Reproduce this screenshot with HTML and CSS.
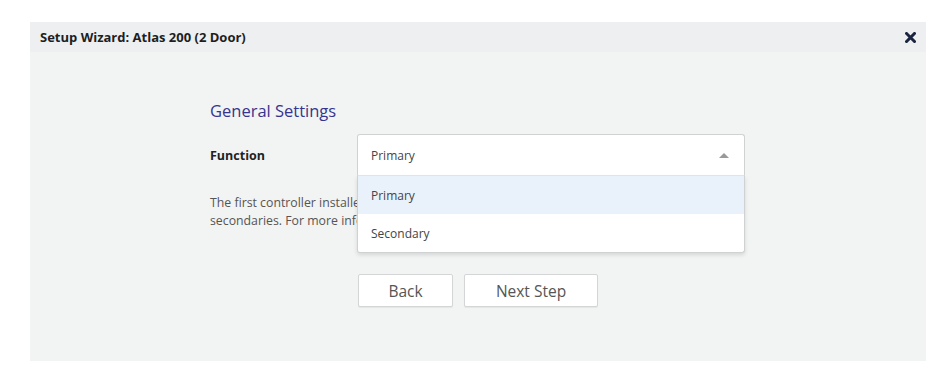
FILE: index.html
```html
<!DOCTYPE html>
<html lang="en">
  <head>
    <meta charset="UTF-8" />
    <meta name="viewport" content="width=device-width, initial-scale=1.0" />
    <title>Setup Wizard</title>
    <link rel="stylesheet" href="styles.css">
  </head>
  <body>
    <div class="wizard">
      <div class="wizard-header">
        <span class="wizard-title">Setup Wizard: Atlas 200 (2 Door)</span>
        <svg class="close" width="11" height="11" viewBox="0 0 11 11">
          <path d="M1.5 1.5 L9.5 9.5 M9.5 1.5 L1.5 9.5" stroke="#1b2440" stroke-width="3" stroke-linecap="square" />
        </svg>
      </div>

      <div class="wizard-body">
        <h2>General Settings</h2>

        <div class="form-row">
          <label>Function</label>
          <div class="select">
            <div class="select-trigger">
              <span>Primary</span>
              <span class="caret"></span>
            </div>
            <ul class="select-menu">
              <li class="active">Primary</li>
              <li>Secondary</li>
            </ul>
          </div>
        </div>

        <p class="help">
          The first controller installed on a site is the primary, the rest are<br />
          secondaries. For more information see the help.
        </p>

        <div class="actions">
          <button class="btn btn-back">Back</button>
          <button class="btn btn-next">Next Step</button>
        </div>
      </div>
    </div>
  </body>
</html>
```

FILE: styles.css
```css
body {
  margin: 0;
  padding: 22px 25px 12px 30px;
  font-family: "Open Sans", "Noto Sans", sans-serif;
  background: #ffffff;
  color: #333;
}

.wizard {
  background: #f2f3f3;
}

.wizard-header {
  height: 30px;
  display: flex;
  align-items: center;
  justify-content: space-between;
  padding: 0 10px;
  background: #edeff1;
}

.wizard-title {
  font-size: 13px;
  font-weight: 700;
  color: #1e1e1e;
}

.wizard-body {
  padding: 47px 0 54px 180px;
}

h2 {
  margin: 0 0 12px;
  font-size: 16.5px;
  line-height: 23px;
  font-weight: 400;
  color: #35358f;
}

.form-row {
  display: flex;
  align-items: center;
}

.form-row label {
  width: 147px;
  font-size: 12.5px;
  font-weight: 700;
  color: #222;
}

.select {
  position: relative;
  width: 388px;
}

.select-trigger {
  height: 42px;
  box-sizing: border-box;
  display: flex;
  align-items: center;
  justify-content: space-between;
  padding: 0 15px 0 13px;
  background: #fff;
  border: 1px solid #cfd1d3;
  border-bottom-color: #e4e6e8;
  border-radius: 3px 3px 0 0;
  font-size: 12px;
  color: #444;
}

.caret {
  width: 0;
  height: 0;
  border-left: 5px solid transparent;
  border-right: 5px solid transparent;
  border-bottom: 5px solid #9a9a9a;
}

.select-menu {
  position: absolute;
  top: 100%;
  left: 0;
  right: 0;
  margin: 0;
  padding: 0;
  list-style: none;
  background: #fff;
  border: 1px solid #cfd1d3;
  border-top: none;
  border-radius: 0 0 3px 3px;
  box-shadow: 0 2px 4px rgba(0, 0, 0, 0.12);
  z-index: 2;
}

.select-menu li {
  height: 38px;
  display: flex;
  align-items: center;
  padding: 0 13px;
  font-size: 12px;
  color: #444;
}

.select-menu li.active {
  background: #e9f1fb;
}

.help {
  margin: 18px 0 0;
  font-size: 12.3px;
  line-height: 18px;
  color: #555;
}

.actions {
  margin-top: 44px;
  padding-left: 148px;
  display: flex;
  gap: 11px;
}

.btn {
  height: 33px;
  background: #fff;
  border: 1px solid #d3d5d7;
  border-radius: 2px;
  box-shadow: 0 1px 1px rgba(0, 0, 0, 0.06);
  font-family: inherit;
  font-size: 15.5px;
  color: #555;
  cursor: pointer;
}

.btn-back {
  width: 95px;
}

.btn-next {
  width: 134px;
}
```
